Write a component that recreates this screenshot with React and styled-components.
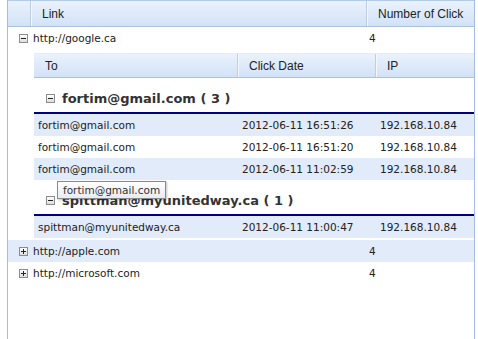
import React from 'react';
import styled, { createGlobalStyle } from 'styled-components';

const GlobalStyle = createGlobalStyle`
  html, body {
    margin: 0;
    padding: 0;
    height: 100%;
    background: #fff;
  }
  #root {
    height: 100%;
  }
`;

const Panel = styled.div`
  position: relative;
  box-sizing: border-box;
  margin-left: 7px;
  width: 468px;
  min-height: 100vh;
  border-left: 1px solid #a3bde3;
  border-right: 1px solid #a3bde3;
  font-family: "DejaVu Sans", Verdana, sans-serif;
  font-size: 10.5px;
  color: #222;
`;

const Header = styled.div`
  display: grid;
  grid-template-columns: ${p => p.cols};
  box-sizing: border-box;
  height: ${p => p.h}px;
  border-top: 1px solid ${p => p.topLine};
  border-bottom: 1px solid #a9c2e4;
  background: linear-gradient(#eaf2fc, #d2e2f7);
  font-family: "Liberation Sans", Arial, sans-serif;
  font-size: 12px;
  color: #222;
`;

const HeaderCell = styled.div`
  display: flex;
  align-items: center;
  padding-left: 11px;
  border-left: ${p => (p.first ? 'none' : '1px solid #bccfe9')};
  box-shadow: ${p => (p.first ? 'none' : 'inset 1px 0 0 #f4f8fd')};
  white-space: nowrap;
`;

const Row = styled.div`
  display: grid;
  grid-template-columns: ${p => p.cols};
  height: 22px;
  align-items: center;
  background: ${p => (p.alt ? '#e1ebfa' : '#fff')};
  white-space: nowrap;
`;

const Cell = styled.div`
  display: flex;
  align-items: center;
  gap: 5px;
  padding-left: ${p => p.pad}px;
`;

const Nested = styled.div`
  margin-left: 26px;
  padding: 4px 0 2px;
`;

const GroupHead = styled.div`
  display: flex;
  align-items: center;
  gap: 7px;
  box-sizing: border-box;
  height: 36px;
  padding: 6px 0 0 12px;
  border-bottom: 2px solid #00007f;
  font-family: "DejaVu Sans", Verdana, sans-serif;
  font-weight: bold;
  font-size: 13px;
  color: #333;
  white-space: nowrap;
`;

const Tooltip = styled.div`
  position: absolute;
  left: 49px;
  top: 181px;
  box-sizing: border-box;
  height: 18px;
  padding: 0 5px;
  display: flex;
  align-items: center;
  border: 1px solid #8a8a8a;
  background: linear-gradient(#ffffff, #e9ebf3);
  box-shadow: 1px 1px 2px rgba(0, 0, 0, 0.25);
  font-size: 10.5px;
  color: #333;
  white-space: nowrap;
`;

const Toggle = ({ open }) => (
  <svg width="9" height="9" viewBox="0 0 9 9" style={{ flex: 'none' }}>
    <defs>
      <linearGradient id="tg" x1="0" y1="0" x2="0" y2="1">
        <stop offset="0" stopColor="#ffffff" />
        <stop offset="1" stopColor="#dcdcdc" />
      </linearGradient>
    </defs>
    <rect x="0.5" y="0.5" width="8" height="8" fill="url(#tg)" stroke="#8c8c8c" />
    <line x1="2" y1="4.5" x2="7" y2="4.5" stroke="#222" />
    {!open && <line x1="4.5" y1="2" x2="4.5" y2="7" stroke="#222" />}
  </svg>
);

const OUTER = '22px 336px 1fr';
const INNER = '203px 138px 1fr';

const groups = [
  {
    to: 'fortim@gmail.com',
    rows: [
      ['2012-06-11 16:51:26', '192.168.10.84'],
      ['2012-06-11 16:51:20', '192.168.10.84'],
      ['2012-06-11 11:02:59', '192.168.10.84'],
    ],
  },
  {
    to: 'spittman@myunitedway.ca',
    rows: [['2012-06-11 11:00:47', '192.168.10.84']],
  },
];

function LinkRow({ url, count, open, alt }) {
  return (
    <Row cols={OUTER} alt={alt}>
      <Cell pad={11}>
        <Toggle open={open} />
      </Cell>
      <Cell pad={3}>{url}</Cell>
      <Cell pad={3}>{count}</Cell>
    </Row>
  );
}

export default function App() {
  return (
    <>
      <GlobalStyle />
      <Panel>
        <Header cols={OUTER} h={27} topLine="#b3c9e8">
          <HeaderCell first />
          <HeaderCell>Link</HeaderCell>
          <HeaderCell>Number of Click</HeaderCell>
        </Header>

        <LinkRow url="http://google.ca" count={4} open />

        <Nested>
          <Header cols={INNER} h={25} topLine="#e3ecf8">
            <HeaderCell first>To</HeaderCell>
            <HeaderCell>Click Date</HeaderCell>
            <HeaderCell>IP</HeaderCell>
          </Header>
          {groups.map(g => (
            <div key={g.to}>
              <GroupHead>
                <Toggle open />
                {g.to} ( {g.rows.length} )
              </GroupHead>
              {g.rows.map(([date, ip], i) => (
                <Row key={date} cols={INNER} alt={i % 2 === 0}>
                  <Cell pad={4}>{g.to}</Cell>
                  <Cell pad={5}>{date}</Cell>
                  <Cell pad={5}>{ip}</Cell>
                </Row>
              ))}
            </div>
          ))}
        </Nested>

        <LinkRow url="http://apple.com" count={4} alt />
        <LinkRow url="http://microsoft.com" count={4} />

        <Tooltip>fortim@gmail.com</Tooltip>
      </Panel>
    </>
  );
}
